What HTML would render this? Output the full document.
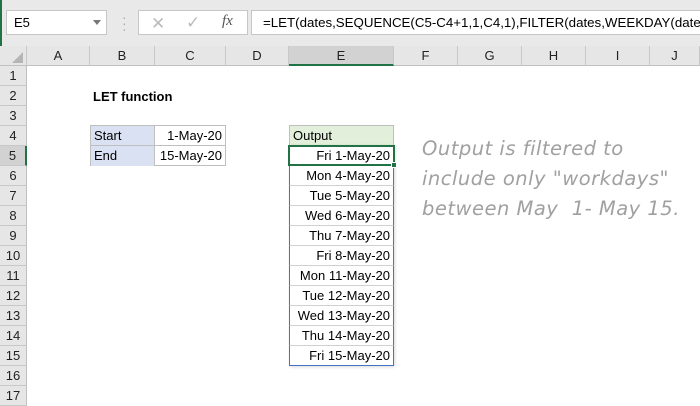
<!DOCTYPE html>
<html><head><style>
*{margin:0;padding:0;box-sizing:border-box}
body{width:700px;height:400px;overflow:hidden;background:#fff;font-family:"Liberation Sans",sans-serif;position:relative;font-size:13px;color:#000}
.a{position:absolute}
.top{left:0;top:0;width:700px;height:46px;background:#e9e9e9}
.ch{top:46px;height:20px;background:#e6e6e6;border-right:1px solid #c8c8c8;border-bottom:1px solid #c0c0c0;text-align:center;line-height:20px;color:#222;font-size:13px}
.rh{left:0;width:27px;height:20px;background:#e6e6e6;border-bottom:1px solid #c8c8c8;border-right:1px solid #c0c0c0;text-align:center;line-height:20px;color:#222;font-size:13px}
.cell{height:20px;line-height:19px;padding:0 3px;white-space:nowrap}
.out{left:289px;width:105px;text-align:right;border-bottom:1px solid #d0d0d0;border-left:1px solid #4472c4;border-right:1px solid #4472c4}
.note{left:422px;font-family:"DejaVu Sans",sans-serif;font-style:italic;color:#a0a0a0;font-size:19.5px;letter-spacing:0.5px;white-space:nowrap}
</style></head><body>
<div class="a top"></div>
<div class="a" style="left:0;top:0;width:2px;height:400px;background:#217346"></div>
<div class="a" style="left:6px;top:10px;width:101px;height:25px;background:#fff;border:1px solid #c6c6c6;line-height:23px;padding-left:7px">E5</div>
<div class="a" style="left:93px;top:20px;width:0;height:0;border-left:4px solid transparent;border-right:4px solid transparent;border-top:5px solid #777"></div>
<div class="a" style="left:122px;top:14px;color:#aaa;font-size:14px;line-height:6px">·<br>·<br>·</div>
<div class="a" style="left:138px;top:10px;width:110px;height:25px;background:#fff;border:1px solid #c6c6c6"></div>
<div class="a" style="left:151px;top:14px;color:#bbb;font-size:17px">✕</div>
<div class="a" style="left:186px;top:13px;color:#bbb;font-size:17px">✓</div>
<div class="a" style="left:222px;top:13px;color:#555;font-size:15px;font-style:italic;font-family:'Liberation Serif',serif">fx</div>
<div class="a" style="left:251px;top:10px;width:449px;height:25px;background:#fff;border:1px solid #c6c6c6;border-right:none;line-height:23px;padding-left:11px;font-size:13.3px;white-space:nowrap;overflow:hidden">=LET(dates,SEQUENCE(C5-C4+1,1,C4,1),FILTER(dates,WEEKDAY(dates,2)&lt;6))</div>
<div class="a ch" style="left:0;width:27px"></div>
<div class="a" style="left:12px;top:52px;width:0;height:0;border-left:11px solid transparent;border-bottom:11px solid #b5b5b5"></div>
<div class="a ch" style="left:27px;width:63px">A</div>
<div class="a ch" style="left:90px;width:65px">B</div>
<div class="a ch" style="left:155px;width:71px">C</div>
<div class="a ch" style="left:226px;width:63px">D</div>
<div class="a ch" style="left:289px;width:105px;background:#d2d2d2;border-bottom:2px solid #217346">E</div>
<div class="a ch" style="left:394px;width:64px">F</div>
<div class="a ch" style="left:458px;width:64px">G</div>
<div class="a ch" style="left:522px;width:64px">H</div>
<div class="a ch" style="left:586px;width:64px">I</div>
<div class="a ch" style="left:650px;width:50px">J</div>
<div class="a rh" style="top:66px">1</div>
<div class="a rh" style="top:86px">2</div>
<div class="a rh" style="top:106px">3</div>
<div class="a rh" style="top:126px">4</div>
<div class="a rh" style="top:146px;background:#d2d2d2;border-right:2px solid #217346">5</div>
<div class="a rh" style="top:166px">6</div>
<div class="a rh" style="top:186px">7</div>
<div class="a rh" style="top:206px">8</div>
<div class="a rh" style="top:226px">9</div>
<div class="a rh" style="top:246px">10</div>
<div class="a rh" style="top:266px">11</div>
<div class="a rh" style="top:286px">12</div>
<div class="a rh" style="top:306px">13</div>
<div class="a rh" style="top:326px">14</div>
<div class="a rh" style="top:346px">15</div>
<div class="a rh" style="top:366px">16</div>
<div class="a rh" style="top:386px">17</div>

<div class="a cell" style="left:90px;top:87px;font-weight:bold">LET function</div>
<div class="a" style="left:90px;top:125px;width:136px;height:41px;border:1px solid #bfbfbf"></div>
<div class="a cell" style="left:91px;top:126px;width:64px;background:#d9e1f2;border-bottom:1px solid #bfbfbf;border-right:1px solid #bfbfbf">Start</div>
<div class="a cell" style="left:91px;top:146px;width:64px;background:#d9e1f2;border-right:1px solid #bfbfbf">End</div>
<div class="a cell" style="left:155px;top:126px;width:70px;text-align:right;border-bottom:1px solid #bfbfbf">1-May-20</div>
<div class="a cell" style="left:155px;top:146px;width:70px;text-align:right">15-May-20</div>

<div class="a cell" style="left:289px;top:125px;width:105px;background:#e2efda;border:1px solid #bfbfbf;border-bottom:none;height:21px">Output</div>
<div class="a" style="left:289px;top:145px;width:105px;height:221px;border:1px solid #4472c4;box-shadow:1px 1px 3px rgba(0,0,0,.15)"></div>
<div class="a cell out" style="top:146px">Fri 1-May-20</div>
<div class="a cell out" style="top:166px">Mon 4-May-20</div>
<div class="a cell out" style="top:186px">Tue 5-May-20</div>
<div class="a cell out" style="top:206px">Wed 6-May-20</div>
<div class="a cell out" style="top:226px">Thu 7-May-20</div>
<div class="a cell out" style="top:246px">Fri 8-May-20</div>
<div class="a cell out" style="top:266px">Mon 11-May-20</div>
<div class="a cell out" style="top:286px">Tue 12-May-20</div>
<div class="a cell out" style="top:306px">Wed 13-May-20</div>
<div class="a cell out" style="top:326px">Thu 14-May-20</div>
<div class="a cell out" style="top:346px;border-bottom:none">Fri 15-May-20</div>
<div class="a" style="left:288px;top:145px;width:107px;height:21px;border:2px solid #217346"></div>
<div class="a" style="left:391px;top:162px;width:6px;height:6px;background:#217346;border:1px solid #fff"></div>

<div class="a note" style="top:137px">Output is filtered to</div>
<div class="a note" style="top:167px">include only "workdays"</div>
<div class="a note" style="top:197px">between May&nbsp; 1- May 15.</div>
</body></html>
